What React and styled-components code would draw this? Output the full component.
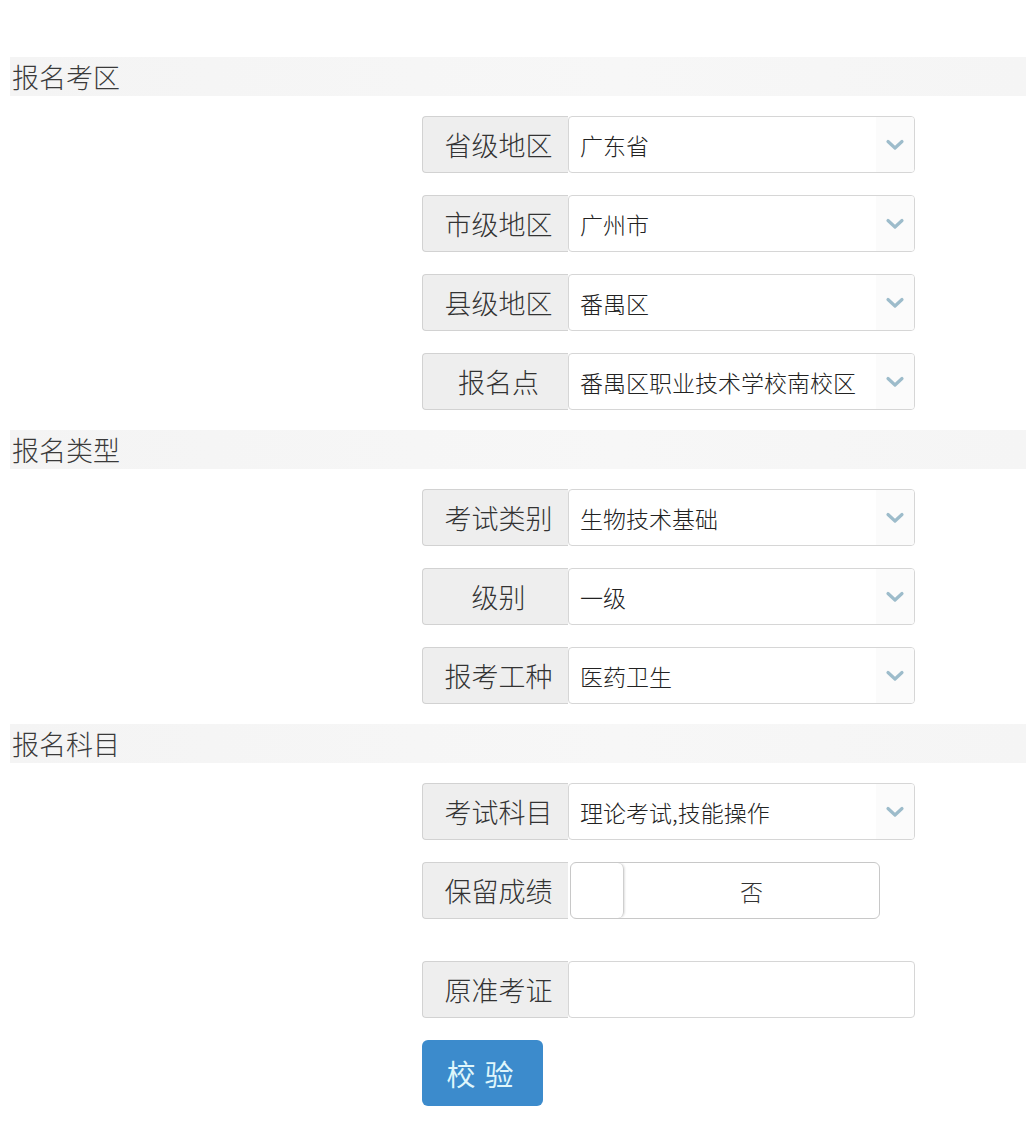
import React from "react";
import styled, { createGlobalStyle } from "styled-components";

const GlobalStyle = createGlobalStyle`
  html, body {
    margin: 0;
    padding: 0;
    background: #ffffff;
    font-family: "Noto Sans CJK SC", "Liberation Sans", sans-serif;
    color: #333;
  }
`;

const Page = styled.div`
  width: 1026px;
  padding-top: 57px;
  box-sizing: border-box;
`;

const SectionHeader = styled.div`
  height: 39px;
  margin-left: 10px;
  padding-left: 2px;
  display: flex;
  align-items: center;
  font-size: 27px;
  font-weight: 300;
  color: #3a3a3a;
  background: linear-gradient(to right, #f4f4f4, #f7f7f7 60%, #f5f5f5);
`;

const Group = styled.div`
  display: flex;
  flex-direction: column;
  gap: 22px;
  padding: 20px 0 20px 422px;
`;

const Row = styled.div`
  display: flex;
  height: 57px;
  margin-top: ${(p) => (p.$extra ? "20px" : "0")};
`;

const Label = styled.div`
  width: 146px;
  box-sizing: border-box;
  display: flex;
  align-items: center;
  justify-content: center;
  padding-left: 6px;
  font-size: 27px;
  font-weight: 300;
  color: #333;
  background: #eeeeee;
  border: 1px solid #d2d2d2;
  border-right: none;
  border-radius: 4px 0 0 4px;
`;

const Select = styled.div`
  width: 347px;
  box-sizing: border-box;
  display: flex;
  align-items: center;
  border: 1px solid #d6d6d6;
  border-radius: 4px;
  background: #fff;
  overflow: hidden;
`;

const Value = styled.div`
  flex: 1;
  padding-left: 11px;
  font-size: 23px;
  font-weight: 300;
  color: #222;
  white-space: nowrap;
`;

const Arrow = styled.div`
  width: 38px;
  align-self: stretch;
  display: flex;
  align-items: center;
  justify-content: center;
  background: #fbfbfb;
`;

const Toggle = styled.div`
  width: 310px;
  box-sizing: border-box;
  margin-left: 2px;
  display: flex;
  border: 1px solid #c8c8c8;
  border-radius: 6px;
  background: #fff;
  overflow: hidden;
`;

const Knob = styled.div`
  width: 52px;
  border-right: 1px solid #cfcfcf;
  border-radius: 6px;
  box-shadow: 1px 0 2px rgba(0, 0, 0, 0.12);
`;

const ToggleText = styled.div`
  flex: 1;
  display: flex;
  align-items: center;
  justify-content: center;
  font-size: 23px;
  font-weight: 300;
  color: #333;
`;

const TextInput = styled.div`
  width: 347px;
  box-sizing: border-box;
  border: 1px solid #d6d6d6;
  border-radius: 4px;
  background: #fff;
`;

const Button = styled.button`
  width: 121px;
  height: 66px;
  border: none;
  border-radius: 6px;
  background: #3c8bcc;
  color: #dff6fb;
  font-family: "Noto Sans CJK SC", sans-serif;
  font-size: 29px;
  letter-spacing: 9px;
  padding-left: 10px;
  cursor: pointer;
`;

const Chevron = () => (
  <svg width="20" height="12" viewBox="0 0 20 12">
    <polyline
      points="3,2.5 10,9 17,2.5"
      fill="none"
      stroke="#9dbccb"
      strokeWidth="3.2"
      strokeLinecap="round"
      strokeLinejoin="round"
    />
  </svg>
);

const SelectRow = ({ label, value }) => (
  <Row>
    <Label>{label}</Label>
    <Select>
      <Value>{value}</Value>
      <Arrow>
        <Chevron />
      </Arrow>
    </Select>
  </Row>
);

const App = () => (
  <Page>
    <GlobalStyle />
    <SectionHeader>报名考区</SectionHeader>
    <Group>
      <SelectRow label="省级地区" value="广东省" />
      <SelectRow label="市级地区" value="广州市" />
      <SelectRow label="县级地区" value="番禺区" />
      <SelectRow label="报名点" value="番禺区职业技术学校南校区" />
    </Group>
    <SectionHeader>报名类型</SectionHeader>
    <Group>
      <SelectRow label="考试类别" value="生物技术基础" />
      <SelectRow label="级别" value="一级" />
      <SelectRow label="报考工种" value="医药卫生" />
    </Group>
    <SectionHeader>报名科目</SectionHeader>
    <Group>
      <SelectRow label="考试科目" value="理论考试,技能操作" />
      <Row>
        <Label>保留成绩</Label>
        <Toggle>
          <Knob />
          <ToggleText>否</ToggleText>
        </Toggle>
      </Row>
      <Row $extra>
        <Label>原准考证</Label>
        <TextInput />
      </Row>
      <div>
        <Button>校验</Button>
      </div>
    </Group>
  </Page>
);

export default App;
